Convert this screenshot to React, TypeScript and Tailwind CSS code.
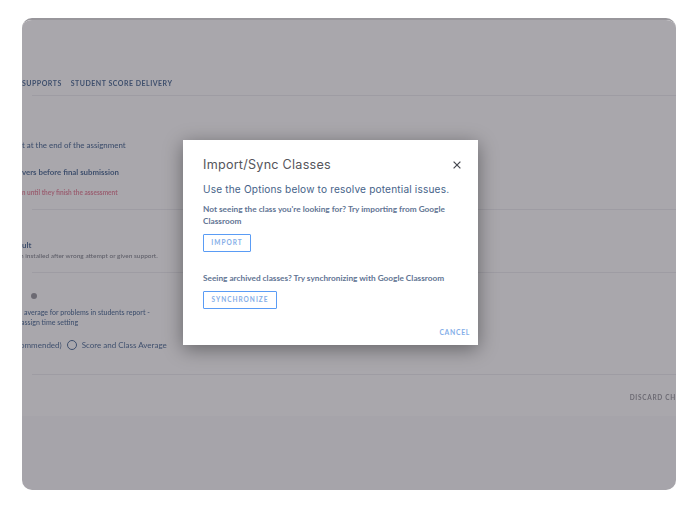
import React from 'react';

const sans = "font-['Lato','Open_Sans',sans-serif]";

const Divider = ({ top, left = 'ml-[10px]' }: { top: string; left?: string }) => (
  <div className={`${top} ${left} h-px bg-[#e9e9ec]`} />
);

const App = () => {
  return (
    <div className="min-h-screen bg-white pt-[18px] pl-[22px]">
      <div className="relative w-[654px] h-[472px] overflow-hidden rounded-[10px] bg-[#f9f9fa] border-t-2 border-[#98969b]">
        {/* Page behind the dialog */}
        <div className={`h-[396px] bg-white text-[#2a4f80] ${sans} blur-[0.5px]`}>
          <div className="flex gap-[9px] pt-[58px] text-[7px] leading-[11px] font-bold tracking-[0.5px] whitespace-nowrap">
            <span>SUPPORTS</span>
            <span>STUDENT SCORE DELIVERY</span>
          </div>
          <Divider top="mt-[6px]" />

          <p className="mt-[43px] text-[7.9px] leading-[12px] font-medium whitespace-nowrap">t at the end of the assignment</p>
          <p className="mt-[15px] text-[7.85px] leading-[12px] font-bold whitespace-nowrap">vers before final submission</p>
          <p className="mt-[10px] -ml-[2px] text-[6.5px] leading-[10px] font-bold text-[#e0708a] whitespace-nowrap">m until they finish the assessment</p>
          <Divider top="mt-[11px]" />

          <p className="mt-[29px] text-[7.9px] leading-[12px] font-bold whitespace-nowrap">ult</p>
          <p className="-ml-[2px] text-[6.5px] leading-[10px] font-medium text-[#6a6e78] whitespace-nowrap">h installed after wrong attempt or given support.</p>
          <Divider top="mt-[11px]" left="ml-[10px] bg-[#d2d2d6]" />

          <div className="mt-[20px] ml-[9px] w-[6px] h-[6px] rounded-full bg-[#85858d]" />
          <p className="mt-[8px] ml-[2px] text-[7px] leading-[10px] font-medium whitespace-nowrap">average for problems in students report -</p>
          <p className="-ml-[1px] text-[7px] leading-[10px] font-medium whitespace-nowrap">assign time setting</p>
          <div className="mt-[12px] -ml-[2px] flex items-center text-[8px] leading-[12px] whitespace-nowrap">
            <span>ommended)</span>
            <span className="ml-[5px] w-[10px] h-[10px] rounded-full border border-[#2a4f80]" />
            <span className="ml-[5px]">Score and Class Average</span>
          </div>
          <Divider top="mt-[23px]" left="ml-[10px] bg-[#d2d2d6]" />

          <div className="mt-[17px] flex justify-end">
            <span className="-mr-[25px] text-[6.5px] leading-[11px] font-bold tracking-[0.7px] text-[#85858d] whitespace-nowrap">DISCARD CHANGES</span>
          </div>
        </div>

        {/* Overlay */}
        <div className="absolute inset-0 bg-[#534f59]/50" />

        {/* Dialog */}
        <div className={`absolute left-[161px] top-[120px] w-[295px] h-[205px] bg-white px-[20px] pt-[17px] shadow-[0_4px_18px_rgba(0,0,0,0.4)] ${sans}`}>
          <div className="flex items-center justify-between">
            <h2 className="font-['Inter',sans-serif] text-[12.6px] leading-[16px] font-normal tracking-[0.25px] text-[#55555b]">Import/Sync Classes</h2>
            <svg width="8" height="8" viewBox="0 0 8 8" className="-mr-[3px]" stroke="#4a4d54" strokeWidth="1.25" fill="none">
              <path d="M0.6 0.6 L7.4 7.4 M7.4 0.6 L0.6 7.4" />
            </svg>
          </div>
          <p className="mt-[9px] font-['Inter',sans-serif] text-[10.1px] leading-[14px] tracking-[0.17px] text-[#466389] whitespace-nowrap">Use the Options below to resolve potential issues.</p>
          <p className="mt-[7px] text-[8.26px] leading-[12px] font-bold text-[#5f7493]">
            Not seeing the class you're looking for? Try importing from Google Classroom
          </p>
          <button className="mt-[7px] block w-[48px] h-[18px] rounded-[1px] border border-[#5a9cf5] text-[6.5px] tracking-[1px] font-bold text-[#84aee8]">IMPORT</button>
          <p className="mt-[20px] text-[8.26px] leading-[12px] font-bold text-[#5f7493] whitespace-nowrap">
            Seeing archived classes? Try synchronizing with Google Classroom
          </p>
          <button className="mt-[7px] block w-[74px] h-[18px] rounded-[1px] border border-[#5a9cf5] text-[6.5px] tracking-[1px] font-bold text-[#84aee8]">SYNCHRONIZE</button>
          <div className="mt-[18px] -mr-[12px] flex justify-end">
            <span className="text-[6.8px] leading-[10px] tracking-[0.7px] font-bold text-[#84aee8]">CANCEL</span>
          </div>
        </div>
      </div>
    </div>
  );
};

export default App;
